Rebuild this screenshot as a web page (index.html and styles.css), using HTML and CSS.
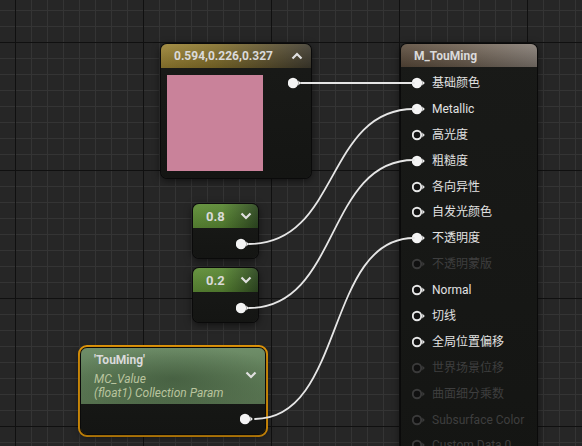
FILE: index.html
```html
<!DOCTYPE html>
<html>
<head>
<meta charset="utf-8">
<link rel="stylesheet" href="styles.css">
</head>
<body>
<svg class="defs" width="0" height="0">
  <defs>
    <symbol id="pin-on" viewBox="0 0 14 12">
      <circle cx="5" cy="6" r="5.2" fill="#f4f4f4"/>
      <polygon points="10.3,3.6 12.8,6 10.3,8.4" fill="#f4f4f4"/>
    </symbol>
    <symbol id="pin-off" viewBox="0 0 14 12">
      <circle cx="5" cy="6" r="4.2" fill="#121212" stroke="#e8e8e8" stroke-width="1.9"/>
      <polygon points="10.3,3.6 12.8,6 10.3,8.4" fill="#e8e8e8"/>
    </symbol>
    <symbol id="pin-dis" viewBox="0 0 14 12">
      <circle cx="5" cy="6" r="4.2" fill="#101010" stroke="#3a3a3a" stroke-width="1.9"/>
      <polygon points="10.3,3.6 12.8,6 10.3,8.4" fill="#3a3a3a"/>
    </symbol>
    <symbol id="chev-up" viewBox="0 0 12 8">
      <polyline points="1.5,6.5 6,2 10.5,6.5" fill="none" stroke="#e0e0e0" stroke-width="2.2"/>
    </symbol>
    <symbol id="chev-down" viewBox="0 0 12 8">
      <polyline points="1.5,1.5 6,6 10.5,1.5" fill="none" stroke="#e0e0e0" stroke-width="2.2"/>
    </symbol>
  </defs>
</svg>

<div class="node color-node">
  <div class="head head-gold">
    <span class="title">0.594,0.226,0.327</span>
    <svg class="chev"><use href="#chev-up"/></svg>
  </div>
  <div class="color-body">
    <div class="swatch"></div>
    <svg class="pin out-pin"><use href="#pin-on"/></svg>
  </div>
</div>

<div class="node const-node n08">
  <div class="head head-green">
    <span class="title big">0.8</span>
    <svg class="chev"><use href="#chev-down"/></svg>
  </div>
  <div class="const-body">
    <svg class="pin"><use href="#pin-on"/></svg>
  </div>
</div>

<div class="node const-node n02">
  <div class="head head-green">
    <span class="title big">0.2</span>
    <svg class="chev"><use href="#chev-down"/></svg>
  </div>
  <div class="const-body">
    <svg class="pin"><use href="#pin-on"/></svg>
  </div>
</div>

<div class="selected">
  <div class="node coll-node">
    <div class="head head-coll">
      <div class="coll-text">
        <div class="title">'TouMing'</div>
        <div class="sub">MC_Value</div>
        <div class="sub">(float1) Collection Param</div>
      </div>
      <svg class="chev"><use href="#chev-down"/></svg>
    </div>
    <div class="coll-body">
      <svg class="pin"><use href="#pin-on"/></svg>
    </div>
  </div>
</div>

<div class="node mat-node">
  <div class="head head-mat">
    <span class="title">M_TouMing</span>
  </div>
  <div class="mat-body">
    <div class="row"><svg class="pin"><use href="#pin-on"/></svg><span>基础颜色</span></div>
    <div class="row"><svg class="pin"><use href="#pin-on"/></svg><span>Metallic</span></div>
    <div class="row"><svg class="pin"><use href="#pin-off"/></svg><span>高光度</span></div>
    <div class="row"><svg class="pin"><use href="#pin-on"/></svg><span>粗糙度</span></div>
    <div class="row"><svg class="pin"><use href="#pin-off"/></svg><span>各向异性</span></div>
    <div class="row"><svg class="pin"><use href="#pin-off"/></svg><span>自发光颜色</span></div>
    <div class="row"><svg class="pin"><use href="#pin-on"/></svg><span>不透明度</span></div>
    <div class="row dis"><svg class="pin"><use href="#pin-dis"/></svg><span>不透明蒙版</span></div>
    <div class="row"><svg class="pin"><use href="#pin-off"/></svg><span>Normal</span></div>
    <div class="row"><svg class="pin"><use href="#pin-off"/></svg><span>切线</span></div>
    <div class="row"><svg class="pin"><use href="#pin-off"/></svg><span>全局位置偏移</span></div>
    <div class="row dis"><svg class="pin"><use href="#pin-dis"/></svg><span>世界场景位移</span></div>
    <div class="row dis"><svg class="pin"><use href="#pin-dis"/></svg><span>曲面细分乘数</span></div>
    <div class="row dis"><svg class="pin"><use href="#pin-dis"/></svg><span>Subsurface Color</span></div>
    <div class="row dis"><svg class="pin"><use href="#pin-dis"/></svg><span>Custom Data 0</span></div>
  </div>
</div>

<svg class="wires" width="582" height="446" viewBox="0 0 582 446">
  <g fill="none" stroke="#e6e6e6" stroke-width="1.8" stroke-linecap="round">
    <path d="M301 83 L414 83"/>
    <path d="M249 244 C 340 244, 325 109, 414 109"/>
    <path d="M249 308 C 340 308, 325 160, 414 160"/>
    <path d="M255 419 C 345 419, 325 238, 414 238"/>
  </g>
</svg>
</body>
</html>
```

FILE: styles.css
```css
html, body {
  margin: 0;
  padding: 0;
}

body {
  width: 582px;
  height: 446px;
  overflow: hidden;
  position: relative;
  background-color: #262626;
  background-image:
    linear-gradient(to right, #101010 1px, transparent 1px),
    linear-gradient(to bottom, #101010 1px, transparent 1px),
    linear-gradient(to right, #343434 1px, transparent 1px),
    linear-gradient(to bottom, #343434 1px, transparent 1px);
  background-size: 128px 128px, 128px 128px, 16px 16px, 16px 16px;
  background-position: 15px 42px, 15px 42px, 15px 42px, 15px 42px;
  font-family: Roboto, "Noto Sans CJK SC", sans-serif;
  color: #e2e2e2;
}

.defs {
  position: absolute;
  width: 0;
  height: 0;
}

.wires {
  position: absolute;
  left: 0;
  top: 0;
  pointer-events: none;
}

.node {
  position: absolute;
  background: linear-gradient(to bottom, #191a18, #141513);
  border-radius: 6px;
  box-shadow: 0 0 0 1px #0a0a0a, 0 2px 8px rgba(0, 0, 0, 0.65);
  overflow: hidden;
  display: flex;
  flex-direction: column;
}

.head {
  display: flex;
  align-items: center;
  justify-content: space-between;
  box-sizing: border-box;
  padding: 0 8px 0 13px;
  flex: none;
}

.title {
  font-size: 12px;
  font-weight: bold;
  color: #dadada;
  white-space: nowrap;
}

.title.big {
  font-size: 13px;
}

.chev {
  width: 12px;
  height: 8px;
  flex: none;
}

.pin {
  width: 14px;
  height: 12px;
  flex: none;
  display: block;
}

/* Color node */
.color-node {
  left: 161px;
  top: 44px;
  width: 150px;
  height: 134px;
}

.head-gold {
  height: 24px;
  background:
    linear-gradient(to bottom, rgba(255, 255, 255, 0.10), rgba(0, 0, 0, 0.18)),
    linear-gradient(to right, #9a8232 0%, #84702a 35%, #5a4f2e 75%, #3e3a2e 100%);
}

.color-body {
  display: flex;
  justify-content: space-between;
  align-items: flex-start;
  padding: 7px 9px 0 6px;
}

.swatch {
  width: 96px;
  height: 96px;
  background: #c9829a;
}

.out-pin {
  margin-top: 2px;
}

/* Constant nodes */
.const-node {
  left: 193px;
  width: 65px;
}

.n08 {
  top: 204px;
  height: 54px;
}

.n02 {
  top: 268px;
  height: 54px;
}

.head-green {
  height: 24px;
  padding-right: 6px;
  background:
    linear-gradient(to bottom, rgba(255, 255, 255, 0.06), rgba(0, 0, 0, 0.15)),
    linear-gradient(to right, #5f8e36 0%, #5a8834 45%, #3f6128 80%, #2f4a22 100%);
}

.const-body {
  display: flex;
  justify-content: flex-end;
  padding: 10px 8px 0 0;
}

/* Collection node */
.selected {
  position: absolute;
  left: 78px;
  top: 345px;
  width: 184px;
  height: 86px;
  border: 3px solid #f2a20a;
  border-radius: 9px;
  background: #0c0c0c;
}

.coll-node {
  left: 0;
  top: 0;
  width: 184px;
  height: 86px;
}

.head-coll {
  height: 56px;
  align-items: flex-start;
  padding-right: 8px;
  background:
    radial-gradient(ellipse 60% 60% at 50% 55%, rgba(30, 50, 30, 0.35), transparent),
    linear-gradient(to bottom, #6f8e69 0%, #5f7d58 50%, #546f4d 100%);
}

.coll-text {
  padding-top: 5px;
}

.coll-text .title {
  line-height: 14px;
  margin-bottom: 6px;
}

.sub {
  font-size: 12px;
  font-style: italic;
  color: #b9c49e;
  line-height: 13.5px;
  white-space: nowrap;
}

.head-coll .chev {
  margin-top: 23px;
}

.coll-body {
  display: flex;
  justify-content: flex-end;
  padding: 9px 11px 0 0;
}

/* Material node */
.mat-node {
  left: 401px;
  top: 44px;
  width: 136px;
  height: 440px;
}

.head-mat {
  height: 23px;
  background:
    linear-gradient(to bottom, rgba(255, 255, 255, 0.10), rgba(0, 0, 0, 0.22)),
    linear-gradient(to right, #5d4d3d 0%, #6d5f50 45%, #857c74 100%);
}

.mat-body {
  display: flex;
  flex-direction: column;
  padding: 3px 0 0 11px;
}

.row {
  height: 25.9px;
  display: flex;
  align-items: center;
  gap: 6px;
  font-size: 12px;
  line-height: 16px;
  color: #e2e2e2;
  white-space: nowrap;
}

.row.dis {
  color: #3e3e3e;
}
```
